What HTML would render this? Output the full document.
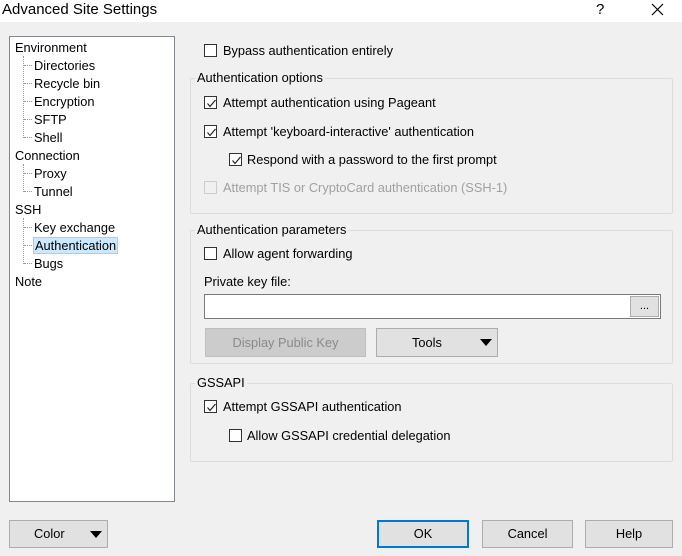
<!DOCTYPE html><html><head><style>
body{margin:0;width:682px;height:556px;background:#f0f0f0;font:12.8px "Liberation Sans",sans-serif;color:#000;position:relative;overflow:hidden}
.a{position:absolute;white-space:nowrap}
.t{line-height:14px}
.cb{position:absolute;width:13px;height:13px;border:1px solid #333;background:#fff;box-sizing:border-box}
.cb.d{border-color:#ccc;background:#f0f0f0}
.cb svg{position:absolute;left:1px;top:1px}
.grp{position:absolute;border:1px solid #dcdcdc;border-radius:2px}
.gl{position:absolute;background:#f0f0f0;padding:0 2px;line-height:14px}
.btn{position:absolute;border:1px solid #adadad;background:#e1e1e1;box-sizing:border-box;text-align:center}
.tri{position:absolute;width:0;height:0;border-left:6px solid transparent;border-right:6px solid transparent;border-top:7px solid #000}
.dl{position:absolute;border-top:1px dotted #999;width:8px}
.vl{position:absolute;border-left:1px dotted #999}
</style></head><body>
<div class="a" style="left:0;top:0;width:682px;height:22px;background:#fff"></div>
<div class="a t" style="left:2px;top:1px;font-size:15px;line-height:18px">Advanced Site Settings</div>
<div class="a" style="left:596px;top:1px;font-size:15px">?</div>
<svg class="a" style="left:651px;top:3px" width="13" height="13"><path d="M1 1L12 12M12 1L1 12" stroke="#000" stroke-width="1.2"/></svg>

<div class="a" style="left:9px;top:36px;width:166px;height:466px;background:#fff;border:1px solid #828790;box-sizing:border-box"></div>
<div class="vl" style="left:23px;top:56px;height:82px"></div>
<div class="vl" style="left:23px;top:164px;height:28px"></div>
<div class="vl" style="left:23px;top:218px;height:46px"></div>
<div class="a t" style="left:15px;top:39px;line-height:18px">Environment<br>&nbsp;<br>&nbsp;<br>&nbsp;<br>&nbsp;<br>&nbsp;<br>Connection<br>&nbsp;<br>&nbsp;<br>SSH<br>&nbsp;<br>&nbsp;<br>&nbsp;<br>Note</div>
<div class="a t" style="left:34px;top:57px;line-height:18px">Directories<br>Recycle bin<br>Encryption<br>SFTP<br>Shell<br>&nbsp;<br>Proxy<br>Tunnel<br>&nbsp;<br>Key exchange<br><span style="background:#cce8ff;outline:1px solid #99d1ff;padding:0 1px">Authentication</span><br>Bugs</div>
<div class="dl" style="left:24px;top:65px"></div><div class="dl" style="left:24px;top:83px"></div><div class="dl" style="left:24px;top:101px"></div><div class="dl" style="left:24px;top:119px"></div><div class="dl" style="left:24px;top:137px"></div><div class="dl" style="left:24px;top:173px"></div><div class="dl" style="left:24px;top:191px"></div><div class="dl" style="left:24px;top:227px"></div><div class="dl" style="left:24px;top:245px"></div><div class="dl" style="left:24px;top:263px"></div>

<div class="cb" style="left:204px;top:44px"></div><div class="a t" style="left:223px;top:44px">Bypass authentication entirely</div>

<div class="grp" style="left:190px;top:78px;width:481px;height:134px"></div>
<div class="gl" style="left:195px;top:71px">Authentication options</div>
<div class="cb" style="left:204px;top:96px"><svg width="11" height="11"><path d="M1.5 5.5L4 8.5L9.5 2" fill="none" stroke="#222" stroke-width="1.2"/></svg></div><div class="a t" style="left:223px;top:96px">Attempt authentication using Pageant</div>
<div class="cb" style="left:204px;top:125px"><svg width="11" height="11"><path d="M1.5 5.5L4 8.5L9.5 2" fill="none" stroke="#222" stroke-width="1.2"/></svg></div><div class="a t" style="left:223px;top:125px">Attempt 'keyboard-interactive' authentication</div>
<div class="cb" style="left:229px;top:153px"><svg width="11" height="11"><path d="M1.5 5.5L4 8.5L9.5 2" fill="none" stroke="#222" stroke-width="1.2"/></svg></div><div class="a t" style="left:247px;top:153px">Respond with a password to the first prompt</div>
<div class="cb d" style="left:204px;top:181px"></div><div class="a t" style="left:223px;top:181px;color:#a0a0a0">Attempt TIS or CryptoCard authentication (SSH-1)</div>

<div class="grp" style="left:190px;top:230px;width:481px;height:132px"></div>
<div class="gl" style="left:195px;top:223px">Authentication parameters</div>
<div class="cb" style="left:204px;top:247px"></div><div class="a t" style="left:223px;top:247px">Allow agent forwarding</div>
<div class="a t" style="left:204px;top:275px">Private key file:</div>
<div class="a" style="left:204px;top:294px;width:457px;height:25px;background:#fff;border:1px solid #7a7a7a;box-sizing:border-box"></div>
<div class="btn" style="left:630px;top:296px;width:29px;height:21px;line-height:18px;font-size:11px">...</div>
<div class="btn" style="left:205px;top:328px;width:161px;height:29px;line-height:27px;background:#cccccc;border-color:#bfbfbf;color:#8a8a8a">Display Public Key</div>
<div class="btn" style="left:376px;top:328px;width:122px;height:29px;line-height:27px;text-align:left;padding-left:35px">Tools</div>
<div class="tri" style="left:480px;top:339px"></div>

<div class="grp" style="left:190px;top:383px;width:481px;height:77px"></div>
<div class="gl" style="left:195px;top:376px">GSSAPI</div>
<div class="cb" style="left:204px;top:400px"><svg width="11" height="11"><path d="M1.5 5.5L4 8.5L9.5 2" fill="none" stroke="#222" stroke-width="1.2"/></svg></div><div class="a t" style="left:223px;top:400px">Attempt GSSAPI authentication</div>
<div class="cb" style="left:229px;top:429px"></div><div class="a t" style="left:247px;top:429px">Allow GSSAPI credential delegation</div>

<div class="btn" style="left:9px;top:520px;width:99px;height:28px;line-height:26px;text-align:left;padding-left:24px">Color</div>
<div class="tri" style="left:90px;top:531px"></div>
<div class="btn" style="left:377px;top:520px;width:92px;height:28px;line-height:24px;border:2px solid #0078d7">OK</div>
<div class="btn" style="left:482px;top:520px;width:91px;height:28px;line-height:26px">Cancel</div>
<div class="btn" style="left:585px;top:520px;width:88px;height:28px;line-height:26px">Help</div>
</body></html>
